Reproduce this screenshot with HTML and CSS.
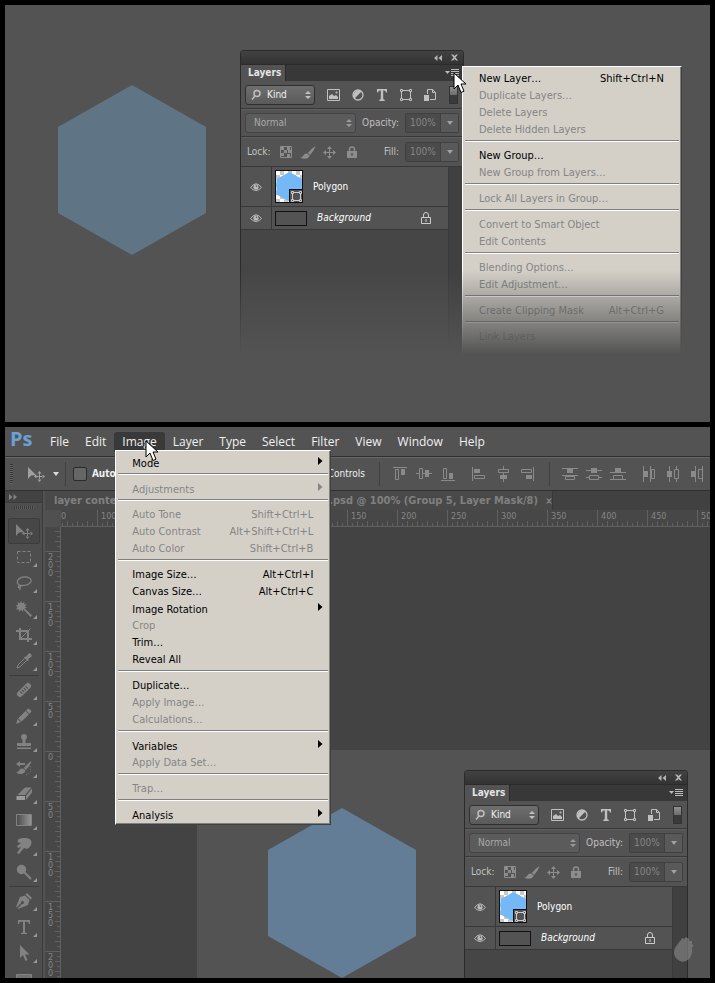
FILE: index.html
```html
<!DOCTYPE html>
<html lang="en">
<head>
<meta charset="utf-8">
<title>Layers panel and Image menu</title>
<link rel="stylesheet" href="styles.css">
</head>
<body>
<svg class="sprite" aria-hidden="true">
  <defs>
    <linearGradient id="ramp"><stop offset="0" stop-color="#4a4a4a"/><stop offset="1" stop-color="#999"/></linearGradient>
    <pattern id="checker" width="8" height="8" patternUnits="userSpaceOnUse"><path fill="#fff" d="M0 0h8v8H0z"/><path fill="#c8c8c8" d="M4 0h4v4H4zM0 4h4v4H0z"/></pattern>
  </defs>
  <symbol id="i-cursor" viewBox="0 0 14 22"><path d="M1 1v16l4-4 3 7.500 3-1.300-3-7.200h5z" fill="#fff" stroke="#000" stroke-linejoin="round"/></symbol>
  <symbol id="i-collapse" viewBox="0 0 8 6"><path d="M0 3l3.500-3v6zM4.500 3L8 0v6z"/></symbol>
  <symbol id="i-close" viewBox="0 0 6 6"><path d="M0 .5h1.700L3 1.800 4.300.5H6L3.900 3 6 5.500H4.300L3 4.200 1.700 5.500H0L2.100 3z"/></symbol>
  <symbol id="i-flyout" viewBox="0 0 14 8"><path d="M0 2h5L2.500 5zM6 0h8v1H6zM6 2h8v1H6zM6 4h8v1H6zM6 6h8v1H6z"/></symbol>
  <symbol id="i-search" viewBox="0 0 12 12"><g fill="none" stroke="currentColor" stroke-width="1.500"><circle cx="7" cy="4.500" r="3"/><path d="M5 7L2 10.500"/></g></symbol>
  <symbol id="i-updown" viewBox="0 0 6 8"><path d="M0 3l3-3 3 3zM0 5h6L3 8z"/></symbol>
  <symbol id="i-image" viewBox="0 0 14 12"><path fill="none" stroke="currentColor" d="M.5.5h12v11H.5z"/><path d="M2 10V7l3-2 2 2 2-1 2 2v2z"/><circle cx="9.500" cy="3.500" r="1"/></symbol>
  <symbol id="i-adjust" viewBox="0 0 12 12"><circle cx="6" cy="6" r="5" fill="none" stroke="currentColor" stroke-width="1.300"/><path d="M9.500 2.500A5 5 0 0 0 2.500 9.500z"/></symbol>
  <symbol id="i-type" viewBox="0 0 12 12"><path d="M1 0h10v3.500h-1Q9.800 1.500 8 1.500H7.200v8q0 1.200 1.500 1.300V12H3.300v-1.200q1.500-.1 1.500-1.300v-8H4Q2.200 1.500 2 3.500H1z"/></symbol>
  <symbol id="i-shape" viewBox="0 0 12 12"><path fill="none" stroke="currentColor" d="M3 1.500h6M3 10.500h6M1.500 3v6M10.500 3v6M.5.5h2v2h-2zM9.500.5h2v2h-2zM.5 9.500h2v2h-2zM9.500 9.500h2v2h-2z"/></symbol>
  <symbol id="i-smart" viewBox="0 0 12 12"><path d="M0 6h5v6H0z"/><path fill="none" stroke="currentColor" d="M3.500 5V.5h5l3 3v7H6M8.500.5v3h3"/></symbol>
  <symbol id="i-pixels" viewBox="0 0 12 12"><path fill="none" stroke="currentColor" d="M.5.5h11v11H.5z"/><path d="M1 1h3v3H1zM7 1h3v3H7zM4 4h3v3H4zM8 4h3v3H8zM1 7h3v3H1zM7 8h3v3H7z"/></symbol>
  <symbol id="i-brush" viewBox="0 0 16 13"><path d="M15.500 0Q12 2 8 7l2 2q4-4 5.500-9zM7 7.500Q4 7 3 10q-1 1.500-3 1.700Q5 13.500 8 12q2-1.500 1.200-3z"/></symbol>
  <symbol id="i-move4" viewBox="0 0 13 13"><path d="M6 3h1v3h3v1H7v3H6V7H3V6h3zM6.500 0L9 3H4zM6.500 13L9 10H4zM0 6.500L3 4v5zM13 6.500L10 4v5z"/></symbol>
  <symbol id="i-lock" viewBox="0 0 10 12"><path fill="none" stroke="currentColor" stroke-width="1.500" d="M2.500 6V3.500Q2.500 1 5 1t2.500 2.500V6"/><path fill-rule="evenodd" d="M0 5h10v7H0zM4.300 7v3h1.400V7z"/></symbol>
  <symbol id="i-lockline" viewBox="0 0 10 12"><path fill="none" stroke="currentColor" d="M2.500 5V3Q2.500.5 5 .5T7.500 3v2M.5 5.500h9v6h-9zM5 7v3"/></symbol>
  <symbol id="i-eye" viewBox="0 0 12 8"><path fill="none" stroke="currentColor" d="M.5 4.500Q3 .8 6 .8t5.500 3.700Q9 7.500 6 7.500T.5 4.500z"/><circle cx="6" cy="4" r="2.600"/><circle cx="6.500" cy="3.300" r=".8" fill="#535353"/></symbol>
  <symbol id="i-poly" viewBox="0 0 26 31"><path fill="url(#checker)" d="M0 0h26v31H0z"/><path fill="#74b8f8" d="M13.500 1L26 8v15l-12.500 7.500L.5 23.500V8z"/><path fill="#111" d="M13 18h13v13H13z"/><path fill="#535353" d="M14 19h12v12H14z"/><path fill="none" stroke="#ccc" d="M17 21.500h6M17 29.500h6M16.500 22v7M24.500 22v7M15.500 20.500h2v2h-2zM23.500 20.500h2v2h-2zM15.500 28.500h2v2h-2zM23.500 28.500h2v2h-2z"/></symbol>
  <symbol id="i-down" viewBox="0 0 6 4"><path d="M0 0h6L3 4z"/></symbol>
  <symbol id="i-right" viewBox="0 0 5 8"><path d="M0 0l4.500 4L0 8z"/></symbol>

  <symbol id="t-move" viewBox="0 0 18 16"><path d="M1 1v12l3-3.500L9 9zM12 7h1v3h3v1h-3v3h-1v-3H9v-1h3zM12.500 5l2 2.500h-4zM12.500 16l2-2.500h-4zM7 10.500L9.500 8.500v4zM18 10.500l-2.500-2v4z"/></symbol>
  <symbol id="t-marquee" viewBox="0 0 16 16"><path fill="none" stroke="currentColor" stroke-dasharray="3 2" d="M1.500 2.500h13v11h-13z"/></symbol>
  <symbol id="t-lasso" viewBox="0 0 16 16"><path fill="none" stroke="currentColor" stroke-width="1.300" d="M3.500 10Q0 8 2 5q3-3.500 8-3 6 1 5 4.500-2 4-8.500 4H4q-2 .5-1.500 2 2 .5 2-.5T3 10.500M4 12.500V15"/></symbol>
  <symbol id="t-wand" viewBox="0 0 16 16"><path d="M5 0l1 2.300L8.500.7 8 3.300l3 .2L8.700 5.200 11 7 8.300 7.200l7.700 7L14.500 16 7.200 8.200 7 11 5 8.700 3 11l-.2-2.800L0 8.500l1.500-2.300L0 4.500l2-.7L1.500 1l2.400 1.200z"/></symbol>
  <symbol id="t-crop" viewBox="0 0 16 16"><path fill="none" stroke="currentColor" stroke-width="2" d="M4 1v11h12M0 4h12v11"/><path stroke="currentColor" d="M5 11l9.500-9.500"/></symbol>
  <symbol id="t-eyedrop" viewBox="0 0 16 16"><path d="M10 4l2.500-3.500Q14 0 15 1t.7 2.500L12 6l1 1-1.500 1L8 4.700 9 3.500z"/><path fill="none" stroke="currentColor" d="M8.500 5.500L2 12l-1 3 3-1 6.500-6.500"/></symbol>
  <symbol id="t-heal" viewBox="0 0 16 16"><path stroke="currentColor" stroke-width="6" stroke-linecap="round" d="M4 12l8-8"/><path stroke="#4d4d4d" stroke-dasharray="1 1.500" stroke-width="3" d="M5 11l6-6"/></symbol>
  <symbol id="t-pencil" viewBox="0 0 16 16"><path d="M12 0.500q2.500.5 3.500 3L13.300 6 10 2.500zM9.500 3l3.300 3.500L5 14l-5 2 1.500-5z"/><path stroke="#4d4d4d" d="M2 11l3.500 3"/></symbol>
  <symbol id="t-stamp" viewBox="0 0 16 16"><path d="M8 0q3 0 3 3 0 1.500-1.500 3v3H15v3H1V9h5.500V6Q5 4.500 5 3q0-3 3-3zM1 13.500h14V15H1z"/></symbol>
  <symbol id="t-history" viewBox="0 0 16 16"><path d="M15.500 1Q12 3 8 8l2 2q4-4 5.500-9zM7 8.500q-3-.5-4 2Q2 12.500 0 12.700 5 15 8 13q2-1.500 1.200-3zM0 4l4-3v2h5v2H4v2z"/><path fill="none" stroke="currentColor" stroke-dasharray="1 1.500" d="M14 6q2 7-4 9"/></symbol>
  <symbol id="t-eraser" viewBox="0 0 16 16"><path d="M9 1.500h6.500L9 9H1.500z"/><path fill="#9a9a9a" d="M.5 10H9v4H.5z"/><path d="M10 9.500L16 2.500v4l-6 7.500z"/></symbol>
  <symbol id="t-gradient" viewBox="0 0 16 16"><path fill="url(#ramp)" stroke="currentColor" d="M.5 2.500h15v11H.5z"/></symbol>
  <symbol id="t-smudge" viewBox="0 0 16 16"><path d="M3 1q3-1.500 7-1 5 .5 5.500 4 0 5-4.500 7L8 10l-5 6-2-1 4-6-3 1L1 8l4-3-3-.5Q1 2 3 1z"/></symbol>
  <symbol id="t-dodge" viewBox="0 0 16 16"><circle cx="5.500" cy="5.500" r="4.700"/><path stroke="currentColor" stroke-width="2" d="M8 8l7 7"/></symbol>
  <symbol id="t-pen" viewBox="0 0 16 16"><path d="M11 0l5 5-1.500 1.500-5-5zM9 2.500L13.500 7 12 12l-10 4-.5-.5L6 11a1.500 1.500 0 1 0-1-1L.5 14.500 0 14 4 4z"/></symbol>
  <symbol id="t-type" viewBox="0 0 16 16"><path d="M2 1h12v4h-1q-.3-2.300-2-2.300H9V13q0 1 2 1v1H5v-1q2 0 2-1V2.700H5Q3.300 2.700 3 5H2z"/></symbol>
  <symbol id="t-arrow" viewBox="0 0 16 16"><path d="M4 0v13l3-3 2.500 6 2-1L9 9.500h4.500z"/></symbol>
  <symbol id="t-rect" viewBox="0 0 16 16"><path fill="#707070" stroke="currentColor" d="M.5 3.500h15v10H.5z"/></symbol>

  <symbol id="a-top" viewBox="0 0 16 16"><path fill="none" stroke="currentColor" d="M1 1.500h14M3.500 3.500h3v10h-3z"/><path d="M9 3h4v6H9z"/></symbol>
  <symbol id="a-mid" viewBox="0 0 16 16"><path fill="none" stroke="currentColor" d="M0 7.500h3M7 7.500h9M3.500 2.500h3v10h-3z"/><path d="M9 4h4v7H9z"/></symbol>
  <symbol id="d-top" viewBox="0 0 16 16"><path fill="none" stroke="currentColor" d="M0 2.500h16M0 9.500h16M3.500 10.500h9v3h-9z"/><path d="M5 3h6v4H5z"/></symbol>
  <symbol id="d-mid" viewBox="0 0 16 16"><path fill="none" stroke="currentColor" d="M0 4.500h16M0 11.500h3M13 11.500h3M3.500 9.500h9v4h-9z"/><path d="M5 2h6v5H5z"/></symbol>
  <symbol id="d-bot" viewBox="0 0 16 16"><path fill="none" stroke="currentColor" d="M0 6.500h16M0 13.500h16M3.500 9.500h9v4h-9z"/><path d="M5 2h6v4H5z"/></symbol>
</svg>

<main class="sheet">
  <section class="scene scene-panel" aria-label="Layers panel menu">
    <svg class="hexagon hexagon-first" viewBox="0 0 148 170"><path d="M74 0l74 42v86l-74 42L0 128V42z"/></svg>
    <div class="window window-first">
      <section class="panel" aria-label="Layers">
        <div class="panel-title"><button aria-label="Collapse"><svg width="8" height="6"><use href="#i-collapse"/></svg></button><button aria-label="Close"><svg width="7" height="7"><use href="#i-close"/></svg></button></div>
        <div class="panel-tabs"><button class="panel-tab">Layers</button><button class="flyout" aria-label="Panel menu"><svg width="14" height="8"><use href="#i-flyout"/></svg></button></div>
        <div class="panel-row filters">
          <div class="pick pick-kind"><svg class="pick-lens" width="12" height="12"><use href="#i-search"/></svg><select aria-label="Filter type"><option>Kind</option></select><svg class="pick-arrows" width="6" height="8"><use href="#i-updown"/></svg></div>
          <div class="icon-set"><button aria-label="Pixel layers"><svg width="14" height="12"><use href="#i-image"/></svg></button><button aria-label="Adjustment layers"><svg width="12" height="12"><use href="#i-adjust"/></svg></button><button aria-label="Type layers"><svg width="12" height="12"><use href="#i-type"/></svg></button><button aria-label="Shape layers"><svg width="12" height="12"><use href="#i-shape"/></svg></button><button aria-label="Smart objects"><svg width="12" height="12"><use href="#i-smart"/></svg></button></div>
          <button class="switch" aria-label="Filtering"></button>
        </div>
        <div class="panel-row">
          <div class="pick pick-blend"><select aria-label="Blend mode"><option>Normal</option></select><svg class="pick-arrows" width="6" height="8"><use href="#i-updown"/></svg></div>
          <label class="field-label" for="opacity1">Opacity:</label>
          <div class="percent"><input id="opacity1" value="100%"><button aria-label="Opacity slider"><svg width="6" height="4"><use href="#i-down"/></svg></button></div>
        </div>
        <div class="panel-row lock-row">
          <span class="lock-label">Lock:</span>
          <div class="icon-set lock-set"><button aria-label="Lock pixels"><svg width="12" height="12"><use href="#i-pixels"/></svg></button><button aria-label="Lock painting"><svg width="16" height="13"><use href="#i-brush"/></svg></button><button aria-label="Lock position"><svg width="13" height="13"><use href="#i-move4"/></svg></button><button aria-label="Lock all"><svg width="10" height="12"><use href="#i-lock"/></svg></button></div>
          <label class="field-label" for="fill1">Fill:</label>
          <div class="percent"><input id="fill1" value="100%"><button aria-label="Fill slider"><svg width="6" height="4"><use href="#i-down"/></svg></button></div>
        </div>
        <div class="layers-area">
          <ul class="layers">
            <li class="layer layer-tall"><button class="eye" aria-label="Visible"><svg width="12" height="8"><use href="#i-eye"/></svg></button><svg class="thumb thumb-poly" viewBox="0 0 26 31"><use href="#i-poly"/></svg><span class="layer-name">Polygon</span></li>
            <li class="layer"><button class="eye" aria-label="Visible"><svg width="12" height="8"><use href="#i-eye"/></svg></button><span class="thumb thumb-flat"></span><em class="layer-name">Background</em><svg class="layer-lock" width="10" height="12"><use href="#i-lockline"/></svg></li>
          </ul>
          <div class="scroll-track"></div>
        </div>
      </section>
      <ul class="menu menu-panel">
        <li><button>New Layer… <kbd>Shift+Ctrl+N</kbd></button></li>
        <li><button disabled>Duplicate Layers…</button></li>
        <li><button disabled>Delete Layers</button></li>
        <li><button disabled>Delete Hidden Layers</button></li>
        <li class="rule"></li>
        <li><button>New Group…</button></li>
        <li><button disabled>New Group from Layers…</button></li>
        <li class="rule"></li>
        <li><button disabled>Lock All Layers in Group…</button></li>
        <li class="rule"></li>
        <li><button disabled>Convert to Smart Object</button></li>
        <li><button disabled>Edit Contents</button></li>
        <li class="rule"></li>
        <li><button disabled>Blending Options…</button></li>
        <li><button disabled>Edit Adjustment…</button></li>
        <li class="rule"></li>
        <li><button disabled>Create Clipping Mask <kbd>Alt+Ctrl+G</kbd></button></li>
        <li class="rule"></li>
        <li><button disabled>Link Layers</button></li>
      </ul>
      <svg class="cursor cursor-panel" width="14" height="22"><use href="#i-cursor"/></svg>
    </div>
    <div class="fade"></div>
  </section>

  <section class="scene app" aria-label="Image menu">
    <nav class="menubar">
      <span class="logo">Ps</span>
      <button>File</button><button>Edit</button>
      <div class="menubar-open">
        <button class="is-open">Image</button>
        <ul class="menu menu-image">
          <li><button class="has-sub">Mode <svg width="5" height="8"><use href="#i-right"/></svg></button></li>
          <li class="rule"></li>
          <li><button class="has-sub" disabled>Adjustments <svg width="5" height="8"><use href="#i-right"/></svg></button></li>
          <li class="rule"></li>
          <li><button disabled>Auto Tone <kbd>Shift+Ctrl+L</kbd></button></li>
          <li><button disabled>Auto Contrast <kbd>Alt+Shift+Ctrl+L</kbd></button></li>
          <li><button disabled>Auto Color <kbd>Shift+Ctrl+B</kbd></button></li>
          <li class="rule"></li>
          <li><button>Image Size… <kbd>Alt+Ctrl+I</kbd></button></li>
          <li><button>Canvas Size… <kbd>Alt+Ctrl+C</kbd></button></li>
          <li><button class="has-sub">Image Rotation <svg width="5" height="8"><use href="#i-right"/></svg></button></li>
          <li><button disabled>Crop</button></li>
          <li><button>Trim…</button></li>
          <li><button>Reveal All</button></li>
          <li class="rule"></li>
          <li><button>Duplicate…</button></li>
          <li><button disabled>Apply Image…</button></li>
          <li><button disabled>Calculations…</button></li>
          <li class="rule"></li>
          <li><button class="has-sub">Variables <svg width="5" height="8"><use href="#i-right"/></svg></button></li>
          <li><button disabled>Apply Data Set…</button></li>
          <li class="rule"></li>
          <li><button disabled>Trap…</button></li>
          <li class="rule"></li>
          <li><button class="has-sub">Analysis <svg width="5" height="8"><use href="#i-right"/></svg></button></li>
        </ul>
        <svg class="cursor cursor-image" width="14" height="22"><use href="#i-cursor"/></svg>
      </div>
      <button>Layer</button><button>Type</button><button>Select</button><button>Filter</button><button>View</button><button>Window</button><button>Help</button>
    </nav>

    <div class="options">
      <span class="grip-v"></span>
      <button class="current-tool" aria-label="Move tool"><svg width="18" height="16"><use href="#t-move"/></svg><svg class="tool-drop" width="6" height="4"><use href="#i-down"/></svg></button>
      <label class="option auto"><input type="checkbox">Auto-</label>
      <label class="option controls"><input type="checkbox">Controls</label>
      <div class="aligns">
        <button aria-label="Align top"><svg width="16" height="16"><use href="#a-top"/></svg></button><button aria-label="Align middle"><svg width="16" height="16"><use href="#a-mid"/></svg></button><button aria-label="Align bottom"><svg class="flip-v" width="16" height="16"><use href="#a-top"/></svg></button>
      </div>
      <div class="aligns aligns-plain">
        <button aria-label="Align left"><svg class="turn-left" width="16" height="16"><use href="#a-top"/></svg></button><button aria-label="Align centre"><svg class="turn" width="16" height="16"><use href="#a-mid"/></svg></button><button aria-label="Align right"><svg class="turn" width="16" height="16"><use href="#a-top"/></svg></button>
      </div>
      <div class="aligns">
        <button aria-label="Distribute top"><svg width="16" height="16"><use href="#d-top"/></svg></button><button aria-label="Distribute middle"><svg width="16" height="16"><use href="#d-mid"/></svg></button><button aria-label="Distribute bottom"><svg width="16" height="16"><use href="#d-bot"/></svg></button>
      </div>
      <div class="aligns aligns-plain">
        <button aria-label="Distribute left"><svg class="turn-left" width="16" height="16"><use href="#d-top"/></svg></button><button aria-label="Distribute centre"><svg class="turn-left" width="16" height="16"><use href="#d-mid"/></svg></button><button aria-label="Distribute right"><svg class="turn-left" width="16" height="16"><use href="#d-bot"/></svg></button>
      </div>
    </div>

    <div class="workspace">
      <aside class="tools">
        <div class="tools-head"><svg class="expand" width="8" height="6"><use href="#i-collapse"/></svg></div>
        <div class="grip-h"></div>
        <button class="tool is-on" aria-label="Move"><svg width="18" height="16"><use href="#t-move"/></svg></button>
        <button class="tool more" aria-label="Marquee"><svg width="16" height="16"><use href="#t-marquee"/></svg></button>
        <button class="tool more" aria-label="Lasso"><svg width="16" height="16"><use href="#t-lasso"/></svg></button>
        <button class="tool more" aria-label="Magic wand"><svg width="16" height="16"><use href="#t-wand"/></svg></button>
        <button class="tool more" aria-label="Crop"><svg width="16" height="16"><use href="#t-crop"/></svg></button>
        <button class="tool more" aria-label="Eyedropper"><svg width="16" height="16"><use href="#t-eyedrop"/></svg></button>
        <hr>
        <button class="tool more" aria-label="Healing brush"><svg width="16" height="16"><use href="#t-heal"/></svg></button>
        <button class="tool more" aria-label="Pencil"><svg width="16" height="16"><use href="#t-pencil"/></svg></button>
        <button class="tool more" aria-label="Stamp"><svg width="16" height="16"><use href="#t-stamp"/></svg></button>
        <button class="tool more" aria-label="History brush"><svg width="16" height="16"><use href="#t-history"/></svg></button>
        <button class="tool more" aria-label="Eraser"><svg width="16" height="16"><use href="#t-eraser"/></svg></button>
        <button class="tool more" aria-label="Gradient"><svg width="16" height="16"><use href="#t-gradient"/></svg></button>
        <button class="tool more" aria-label="Smudge"><svg width="16" height="16"><use href="#t-smudge"/></svg></button>
        <button class="tool more" aria-label="Dodge"><svg width="16" height="16"><use href="#t-dodge"/></svg></button>
        <hr>
        <button class="tool more" aria-label="Pen"><svg width="16" height="16"><use href="#t-pen"/></svg></button>
        <button class="tool more" aria-label="Type"><svg width="16" height="16"><use href="#t-type"/></svg></button>
        <button class="tool more" aria-label="Path selection"><svg width="16" height="16"><use href="#t-arrow"/></svg></button>
        <button class="tool more" aria-label="Rectangle"><svg width="16" height="16"><use href="#t-rect"/></svg></button>
      </aside>
      <div class="document">
        <div class="doc-tabs"><div class="doc-tab"><span class="doc-start">layer conten</span><span>4.psd @ 100% (Group 5, Layer Mask/8)</span><button aria-label="Close document"><svg width="6" height="6"><use href="#i-close"/></svg></button></div></div>
        <div class="doc-grid">
          <div class="corner"></div>
          <div class="ruler-x"><span>0</span><span>100</span><span></span><span></span><span></span><span></span><span>150</span><span>200</span><span>250</span><span>300</span><span>350</span><span>400</span><span>450</span><span>500</span></div>
          <div class="ruler-y"><span></span><span>200</span><span>150</span><span>100</span><span>50</span><span>0</span><span>50</span><span>100</span><span>150</span><span>200</span></div>
          <div class="canvas"><div class="page"><svg class="hexagon hexagon-second" viewBox="0 0 148 170"><path d="M74 0l74 42v86l-74 42L0 128V42z"/></svg></div></div>
        </div>
      </div>
    </div>

    <div class="window window-second">
      <section class="panel" aria-label="Layers">
        <div class="panel-title"><button aria-label="Collapse"><svg width="8" height="6"><use href="#i-collapse"/></svg></button><button aria-label="Close"><svg width="7" height="7"><use href="#i-close"/></svg></button></div>
        <div class="panel-tabs"><button class="panel-tab">Layers</button><button class="flyout" aria-label="Panel menu"><svg width="14" height="8"><use href="#i-flyout"/></svg></button></div>
        <div class="panel-row filters">
          <div class="pick pick-kind"><svg class="pick-lens" width="12" height="12"><use href="#i-search"/></svg><select aria-label="Filter type"><option>Kind</option></select><svg class="pick-arrows" width="6" height="8"><use href="#i-updown"/></svg></div>
          <div class="icon-set"><button aria-label="Pixel layers"><svg width="14" height="12"><use href="#i-image"/></svg></button><button aria-label="Adjustment layers"><svg width="12" height="12"><use href="#i-adjust"/></svg></button><button aria-label="Type layers"><svg width="12" height="12"><use href="#i-type"/></svg></button><button aria-label="Shape layers"><svg width="12" height="12"><use href="#i-shape"/></svg></button><button aria-label="Smart objects"><svg width="12" height="12"><use href="#i-smart"/></svg></button></div>
          <button class="switch" aria-label="Filtering"></button>
        </div>
        <div class="panel-row">
          <div class="pick pick-blend"><select aria-label="Blend mode"><option>Normal</option></select><svg class="pick-arrows" width="6" height="8"><use href="#i-updown"/></svg></div>
          <label class="field-label" for="opacity2">Opacity:</label>
          <div class="percent"><input id="opacity2" value="100%"><button aria-label="Opacity slider"><svg width="6" height="4"><use href="#i-down"/></svg></button></div>
        </div>
        <div class="panel-row lock-row">
          <span class="lock-label">Lock:</span>
          <div class="icon-set lock-set"><button aria-label="Lock pixels"><svg width="12" height="12"><use href="#i-pixels"/></svg></button><button aria-label="Lock painting"><svg width="16" height="13"><use href="#i-brush"/></svg></button><button aria-label="Lock position"><svg width="13" height="13"><use href="#i-move4"/></svg></button><button aria-label="Lock all"><svg width="10" height="12"><use href="#i-lock"/></svg></button></div>
          <label class="field-label" for="fill2">Fill:</label>
          <div class="percent"><input id="fill2" value="100%"><button aria-label="Fill slider"><svg width="6" height="4"><use href="#i-down"/></svg></button></div>
        </div>
        <div class="layers-area">
          <ul class="layers">
            <li class="layer layer-tall"><button class="eye" aria-label="Visible"><svg width="12" height="8"><use href="#i-eye"/></svg></button><svg class="thumb thumb-poly" viewBox="0 0 26 31"><use href="#i-poly"/></svg><span class="layer-name">Polygon</span></li>
            <li class="layer"><button class="eye" aria-label="Visible"><svg width="12" height="8"><use href="#i-eye"/></svg></button><span class="thumb thumb-flat"></span><em class="layer-name">Background</em><svg class="layer-lock" width="10" height="12"><use href="#i-lockline"/></svg></li>
          </ul>
          <div class="scroll-track"></div>
        </div>
      </section>
    </div>
    <svg class="mark" viewBox="0 0 20 26"><path d="M3 9Q5 6 7 4l1-2 2 1 2-2 3 2v2l3 0v3l2 2-2 1q1 8-3 12-4 4-9 2Q1 23 0 17q0-5 3-8z"/></svg>
  </section>
</main>
</body>
</html>
```
FILE: styles.css
```css
* { box-sizing: border-box; }

:root {
  --ui: "DejaVu Sans Condensed", "DejaVu Sans", sans-serif;
  --face: #535353;
  --edge: #383838;
}

body {
  margin: 0;
  background: #000;
  color: #e4e4e4;
  font: 10px/16px var(--ui);
}

button, select, input {
  margin: 0;
  padding: 0;
  border: 0;
  background: none;
  color: inherit;
  font: inherit;
  appearance: none;
}

ul { margin: 0; padding: 0; list-style: none; }
svg { display: block; flex: none; fill: currentColor; }
kbd { font: inherit; }
.sprite { position: absolute; width: 0; height: 0; }

.sheet {
  display: grid;
  grid-template-rows: 417fr 551fr;
  gap: 5px;
  height: 100vh;
  padding: 5px;
}

.scene {
  position: relative;
  min-height: 0;
  overflow: hidden;
  background: var(--face);
}

.hexagon { width: 148px; height: 170px; }
.hexagon-first { position: absolute; left: 53px; top: 80px; fill: #5f7586; }
.hexagon-second { margin: 58px 0 0 71px; fill: #637d97; }

.fade {
  position: absolute;
  inset: 265px 0 0;
  background: linear-gradient(#53535300, #535353 84px);
  pointer-events: none;
}

/* Floating windows */
.window { position: absolute; width: 224px; }
.window-first { left: 235px; top: 45px; height: 310px; }
.window-second { right: 22px; top: 343px; bottom: 0; }

.panel {
  display: flex;
  flex-direction: column;
  height: 100%;
  border: 1px solid #2b2b2b;
  border-bottom: 0;
  border-radius: 4px 4px 0 0;
  background: var(--face);
  overflow: hidden;
}

.panel-title {
  display: flex;
  align-items: center;
  justify-content: flex-end;
  gap: 9px;
  height: 13px;
  padding-right: 5px;
  background: linear-gradient(#424242, #333);
  color: #b4b4b4;
}

.panel-tabs {
  display: flex;
  justify-content: space-between;
  height: 17px;
  padding-right: 4px;
  background: #383838;
  border-top: 1px solid #2b2b2b;
}
.panel-tab {
  padding: 0 4px 0 7px;
  border-right: 1px solid #2b2b2b;
  background: var(--face);
  font-weight: bold;
}
.flyout { color: #bbb; }

.panel-row {
  display: flex;
  align-items: center;
  flex: none;
  height: 28px;
  padding: 0 4px;
  border-bottom: 1px solid var(--edge);
  color: #c0c0c0;
}
.panel-row + .panel-row { border-top: 1px solid #5e5e5e; }
.lock-row { height: 30px; }

.pick { display: flex; position: relative; }
.pick select {
  width: 100%;
  height: 20px;
  padding: 0 8px;
  border: 1px solid #444;
  border-radius: 3px;
  background: #5b5b5b;
  color: #aaa;
}
.pick-kind { width: 70px; }
.pick-kind select {
  padding-left: 21px;
  border-color: #303030;
  background: linear-gradient(#6e6e6e, #5a5a5a);
  color: #f0f0f0;
}
.pick-blend { width: 111px; color: #999; }
.pick-lens, .pick-arrows { position: absolute; top: 6px; pointer-events: none; }
.pick-lens { left: 5px; top: 4px; }
.pick-arrows { right: 4px; }

.icon-set { display: flex; margin-left: 7px; }
.icon-set button { display: grid; place-items: center; width: 24px; height: 20px; }
.lock-set { margin-left: 4px; color: #8c8c8c; }
.lock-set button { width: 22px; }
.lock-label { padding-left: 2px; }

.switch {
  width: 9px;
  height: 18px;
  margin-left: auto;
  margin-right: 1px;
  border: 1px solid #333;
  background: linear-gradient(#909090, #6c6c6c 8px, #3a3a3a 8px);
}

.field-label { margin-left: auto; padding-right: 6px; }
.percent { display: flex; height: 20px; border: 1px solid #404040; border-radius: 2px; color: #a0a0a0; }
.percent input { width: 34px; padding-left: 4px; background: #4b4b4b; color: #858585; }
.percent button { display: grid; place-items: center; width: 18px; border-left: 1px solid #404040; background: #595959; }

.layers-area { display: flex; flex: 1; background: #464646; }
.layers { flex: 1; }
.scroll-track { width: 15px; background: #404040; border-left: 1px solid #3a3a3a; }
.layer {
  display: flex;
  align-items: center;
  height: 23px;
  border-bottom: 1px solid var(--edge);
  background: var(--face);
  color: #fff;
}
.layer-tall { height: 40px; }
.eye { display: grid; place-items: center; align-self: stretch; width: 31px; border-right: 1px solid var(--edge); color: #bbb; }
.thumb { margin-left: 3px; border: 1px solid #111; }
.thumb-poly { width: 28px; height: 33px; }
.thumb-flat { width: 32px; height: 15px; }
.layer-name { padding-left: 10px; }
.layer-lock { margin-left: auto; margin-right: 17px; color: #ccc; }

/* Drop-down menus */
.menu {
  position: absolute;
  padding: 2px 1px;
  border: 1px solid;
  border-color: #fff #404040 #404040 #fff;
  box-shadow: inset -1px -1px #808080;
  background: #d4d0c8;
  color: #000;
  font: 11px/17px var(--ui);
}
.menu button {
  display: flex;
  justify-content: space-between;
  align-items: flex-start;
  width: 100%;
  height: 17px;
  padding: 1px 16px 0 15px;
  white-space: nowrap;
}
.menu button:disabled { color: #858585; }
.menu .has-sub { padding: 2px 6px 0 15px; }
.menu .has-sub svg { margin-top: 2px; }
.rule { height: 2px; margin: 3px 1px 4px; border-top: 1px solid #808080; border-bottom: 1px solid #fff; }
.menu-panel { left: 222px; top: 16px; width: 220px; height: 300px; }

.cursor { position: absolute; }
.cursor-panel { left: 213px; top: 22px; }
.cursor-image { left: 31px; top: 8px; }

/* Application frame */
.app { display: flex; flex-direction: column; }
.menubar {
  display: flex;
  align-items: center;
  flex: none;
  height: 30px;
  border-bottom: 1px solid #303030;
  font: 12px/18px "Open Sans", sans-serif;
  color: #f0f0f0;
}
.menubar > button, .is-open { padding: 0 8px; }
.logo { width: 37px; padding: 0 0 5px 5px; color: #6d9fd3; font-size: 20px; font-weight: 700; line-height: 24px; }
.menubar-open { position: relative; z-index: 3; }
.is-open { height: 20px; border-radius: 3px 3px 0 0; background: #393939; }
.menu-image { left: 1px; top: 18px; width: 216px; }

.options {
  display: flex;
  align-items: center;
  flex: none;
  height: 34px;
  padding: 0 5px;
  border-top: 1px solid #666;
  border-bottom: 1px solid #303030;
  color: #8a8a8a;
}
.grip-v { width: 3px; height: 20px; background: repeating-linear-gradient(#353535 0 1px, #666 1px 2px); }
.current-tool { display: flex; align-items: center; gap: 8px; height: 24px; margin-left: 14px; padding-right: 6px; border-right: 1px solid #404040; }
.current-tool svg:first-child { color: #a0a0a0; }
.current-tool .tool-drop { color: #ddd; }
.option { display: flex; align-items: center; gap: 5px; color: #f0f0f0; }
.option input { width: 14px; height: 14px; border: 1px solid #2b2b2b; border-radius: 2px; background: #666; }
.auto { width: 238px; padding-left: 7px; font-weight: bold; }
.controls { justify-content: flex-end; width: 70px; }
.aligns { display: flex; gap: 8px; margin-left: 14px; padding-left: 12px; border-left: 1px solid #404040; height: 24px; align-items: center; }
.aligns-plain { border-color: transparent; margin-left: 2px; }
.flip-v { transform: scaleY(-1); }
.turn { transform: rotate(90deg); }
.turn-left { transform: rotate(-90deg); }

.workspace { display: flex; flex: 1; min-height: 0; }
.tools { display: flex; flex-direction: column; align-items: center; flex: none; width: 38px; background: #4e4e4e; color: #828282; border-right: 1px solid #3a3a3a; }
.tools-head { align-self: stretch; flex: none; height: 12px; padding: 3px 4px; background: #434343; border-bottom: 1px solid #3a3a3a; }
.expand { transform: scaleX(-1); }
.grip-h { flex: none; width: 20px; height: 3px; margin: 3px 0 9px; background: repeating-linear-gradient(90deg, #3a3a3a 0 1px, #5c5c5c 1px 2px); }
.tool { display: grid; place-items: center; flex: none; position: relative; width: 32px; height: 26px; }
.is-on { border: 1px solid #3c3c3c; border-radius: 2px; background: #474747; }
.more::after { content: ""; position: absolute; right: 3px; bottom: 3px; border: 2px solid; border-color: transparent #999 #999 transparent; }
.tools hr { flex: none; width: 30px; margin: 1px 0; border: 0; border-top: 1px solid #3c3c3c; }

.document { display: flex; flex-direction: column; flex: 1; min-width: 0; margin-left: 2px; }
.doc-tabs { height: 19px; background: #414141; }
.doc-tab {
  display: flex;
  align-items: center;
  width: 508px;
  height: 19px;
  padding-left: 9px;
  border-right: 1px solid #383838;
  background: #494949;
  color: #808080;
  font: bold 11px/18px var(--ui);
  white-space: nowrap;
}
.doc-start { width: 270px; }
.doc-tab button { margin-left: 8px; }
.doc-grid { display: grid; grid-template: 17px 1fr / 16px 1fr; flex: 1; min-height: 0; color: #858585; }
.corner { background: #505050; }
.ruler-x, .ruler-y { display: flex; overflow: hidden; background-color: #474747; font-size: 9px; }
.ruler-x {
  border-bottom: 1px solid #606060;
  background-image:
    linear-gradient(90deg, #606060 1px, transparent 1px),
    linear-gradient(90deg, #606060 1px, transparent 1px),
    linear-gradient(90deg, #606060 1px, transparent 1px);
  background-size: 50px 100%, 10px 5px, 5px 3px;
  background-position: 36px 0, 6px 100%, 1px 100%;
  background-repeat: repeat-x;
}
.ruler-x span { flex: none; width: 50px; padding-left: 4px; line-height: 12px; }
.ruler-x span:first-child { width: 36px; padding-left: 0; }
.ruler-y {
  flex-direction: column;
  border-right: 1px solid #606060;
  background-image:
    linear-gradient(#606060 1px, transparent 1px),
    linear-gradient(#606060 1px, transparent 1px),
    linear-gradient(#606060 1px, transparent 1px);
  background-size: 100% 50px, 5px 10px, 3px 5px;
  background-position: 0 24px, 100% 4px, 100% 4px;
  background-repeat: repeat-y;
}
.ruler-y span { flex: none; width: 10px; height: 50px; padding: 2px 0 0 3px; line-height: 8px; word-break: break-all; }
.ruler-y span:first-child { height: 24px; }
.canvas { min-width: 0; overflow: hidden; background: #434343; padding: 223px 0 0 136px; }
.page { height: 100%; background: var(--face); overflow: hidden; }

.mark { position: absolute; right: 16px; bottom: 16px; width: 20px; height: 26px; fill: #808080; opacity: .7; }
```
